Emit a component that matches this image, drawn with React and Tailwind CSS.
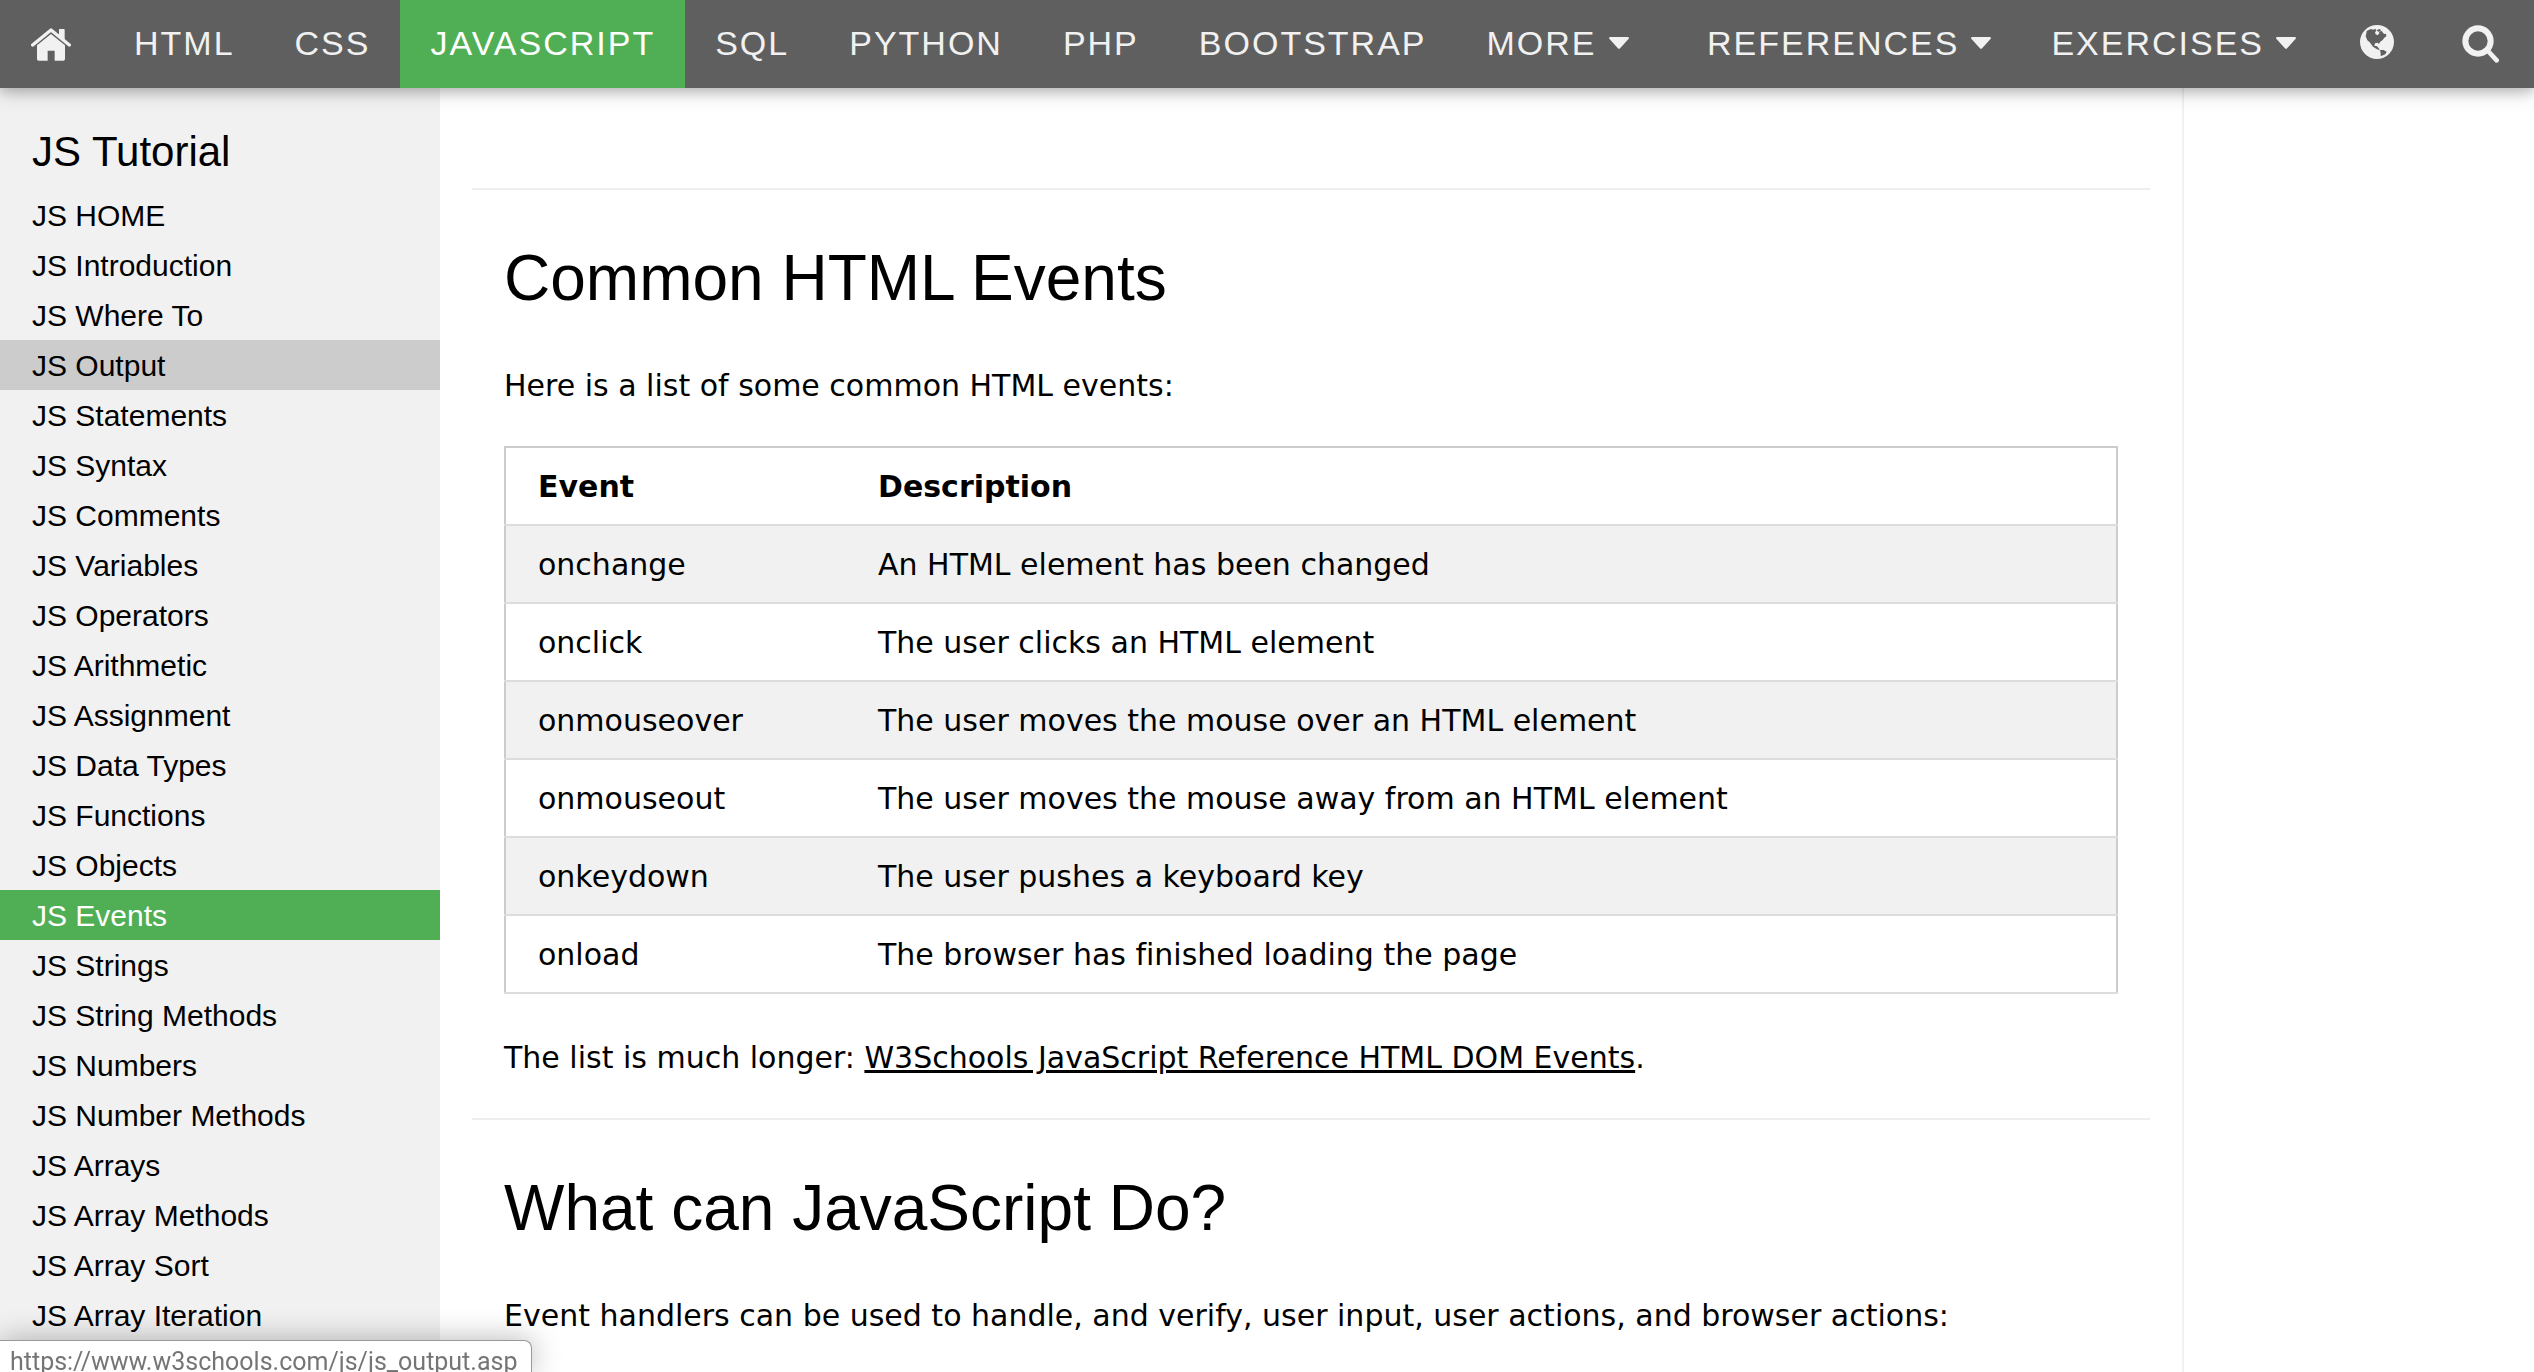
import React from "react";

function HomeIcon() {
  return (
    <svg viewBox="0 0 120 99" aria-hidden="true" className="h-[33px] w-10">
      <path d="M84 3h15q2 0 2 2v32L84 24z" fill="currentColor" />
      <path d="M5 51L60 6l55 45" fill="none" stroke="currentColor" strokeWidth="10" strokeLinecap="round" strokeLinejoin="round" />
      <path d="M60 18l42 34v41q0 5-5 5H71V68H50v30H23q-5 0-5-5V52z" fill="currentColor" />
    </svg>
  );
}

function GlobeIcon() {
  return (
    <svg viewBox="0 0 102 102" aria-hidden="true" className="size-[34px]">
      <circle cx="51" cy="51" r="51" fill="currentColor" />
      <path
        d="M20 18L32 12L40 14L46 11L49 17L45 22L47 28L53 31L58 25L57 20L65 18L72 27L78 26L79 34L73 38L68 45L60 51L57 57L53 53L45 55L43 62L51 64L55 68L60 76L51 73L39 65L29 52L22 46L17 34L19 25Z"
        fill="#5f5f5f"
      />
      <path d="M50 15l10-3 3 6-9 2z" fill="#5f5f5f" />
      <path d="M60 75L71 75L80 80L76 88L62 94L62 85Z" fill="#5f5f5f" />
    </svg>
  );
}

function SearchIcon() {
  return (
    <svg viewBox="0 0 114 114" fill="none" stroke="currentColor" strokeLinecap="round" aria-hidden="true" className="size-[38px]">
      <circle cx="48" cy="48" r="38" strokeWidth="18" />
      <path d="M78 78l26 28" strokeWidth="14" />
    </svg>
  );
}

function CaretIcon() {
  return (
    <svg viewBox="0 0 20 12" aria-hidden="true" className="ml-3 h-3 w-5" fill="currentColor">
      <path d="M1.500 0h17q1.500 0 1.500 1 0 .6-.5 1.100l-8.400 9.200q-1.100 1-2.200 0L.5 2.100Q0 1.600 0 1 0 0 1.500 0z" />
    </svg>
  );
}

const topics = ["HTML", "CSS", "JAVASCRIPT", "SQL", "PYTHON", "PHP", "BOOTSTRAP"];

const chapters = [
  "JS HOME",
  "JS Introduction",
  "JS Where To",
  "JS Output",
  "JS Statements",
  "JS Syntax",
  "JS Comments",
  "JS Variables",
  "JS Operators",
  "JS Arithmetic",
  "JS Assignment",
  "JS Data Types",
  "JS Functions",
  "JS Objects",
  "JS Events",
  "JS Strings",
  "JS String Methods",
  "JS Numbers",
  "JS Number Methods",
  "JS Arrays",
  "JS Array Methods",
  "JS Array Sort",
  "JS Array Iteration",
];

const events = [
  ["onchange", "An HTML element has been changed"],
  ["onclick", "The user clicks an HTML element"],
  ["onmouseover", "The user moves the mouse over an HTML element"],
  ["onmouseout", "The user moves the mouse away from an HTML element"],
  ["onkeydown", "The user pushes a keyboard key"],
  ["onload", "The browser has finished loading the page"],
];

function Menu({ label }) {
  return (
    <button type="button" className="flex h-full items-center px-[30px] pb-0.5 tracking-[2px]">
      {label}
      <CaretIcon />
    </button>
  );
}

function chapterStyle(name) {
  if (name === "JS Output") return "bg-[#cccccc] text-black";
  if (name === "JS Events") return "bg-[#50ae55] text-white";
  return "text-black";
}

export default function App() {
  return (
    <div className="flex h-screen flex-col overflow-hidden bg-white font-['Liberation_Sans',Arial,sans-serif] text-black">
      <nav className="relative z-10 flex h-[88px] shrink-0 items-center justify-between bg-[#5f5f5f] text-[34px] text-[#f1f1f1] shadow-[0_4px_10px_0_rgba(0,0,0,0.16),0_4px_20px_0_rgba(0,0,0,0.19)]">
        <div className="flex h-full items-center">
          <a href="#home" aria-label="Home" className="flex h-full items-center pr-[33px] pl-[31px]">
            <HomeIcon />
          </a>
          {topics.map((topic) => (
            <a
              key={topic}
              href={"#" + topic.toLowerCase()}
              className={
                topic === "JAVASCRIPT"
                  ? "flex h-full items-center bg-[#50ae55] px-[30px] pb-0.5 tracking-[2px] text-white"
                  : "flex h-full items-center px-[30px] pb-0.5 tracking-[2px]"
              }
            >
              {topic}
            </a>
          ))}
          <Menu label="MORE" />
        </div>
        <div className="flex h-full items-center">
          <Menu label="REFERENCES" />
          <Menu label="EXERCISES" />
          <button type="button" aria-label="Translate" className="flex h-full items-center px-[34px] pb-1">
            <GlobeIcon />
          </button>
          <button type="button" aria-label="Search" className="flex h-full items-center px-[34px]">
            <SearchIcon />
          </button>
        </div>
      </nav>

      <div className="flex min-h-0 flex-1">
        <aside className="w-[440px] shrink-0 overflow-hidden bg-[#f1f1f1] pt-8">
          <h2 className="px-8 pt-0.5 pb-2 text-[42px] leading-[60px]">JS Tutorial</h2>
          <ul>
            {chapters.map((name) => (
              <li key={name}>
                <a href="#chapter" className={"block px-8 pt-0.5 text-[30px] leading-[48px] " + chapterStyle(name)}>
                  {name}
                </a>
              </li>
            ))}
          </ul>
        </aside>

        <main className="min-w-0 flex-1 overflow-hidden border-r-2 border-[#f1f1f1] px-8 pt-[100px] font-[Verdana,'DejaVu_Sans',sans-serif] text-[30px] leading-[44px] [font-variant-ligatures:none]">
          <hr className="border-t-2 border-[#eeeeee]" />
          <section className="px-8 pt-10 pb-[38px]">
            <h1 className="font-['Liberation_Sans',Arial,sans-serif] text-[64px] leading-[96px]">Common HTML Events</h1>
            <p className="mt-[38px]">Here is a list of some common HTML events:</p>
            <table className="mt-[38px] mb-[42px] w-full border-collapse border-2 border-[#cccccc] text-left">
              <thead>
                <tr className="border-b-2 border-[#dddddd]">
                  <th className="w-[357px] pt-[17px] pr-4 pb-[15px] pl-8 font-bold">Event</th>
                  <th className="px-4 pt-[17px] pb-[15px] font-bold">Description</th>
                </tr>
              </thead>
              <tbody>
                {events.map(([name, text]) => (
                  <tr key={name} className="border-b-2 border-[#dddddd] odd:bg-[#f1f1f1]">
                    <td className="pt-[17px] pr-4 pb-[15px] pl-8">{name}</td>
                    <td className="px-4 pt-[17px] pb-[15px]">{text}</td>
                  </tr>
                ))}
              </tbody>
            </table>
            <p>
              The list is much longer:{" "}
              <a href="#dom-events" className="underline">
                W3Schools JavaScript Reference HTML DOM Events
              </a>
              .
            </p>
          </section>
          <hr className="border-t-2 border-[#eeeeee]" />
          <section className="px-8 pt-10">
            <h1 className="font-['Liberation_Sans',Arial,sans-serif] text-[64px] leading-[96px]">What can JavaScript Do?</h1>
            <p className="mt-[38px]">
              Event handlers can be used to handle, and verify, user input, user actions, and browser actions:
            </p>
          </section>
        </main>
        <div className="w-[350px] shrink-0" />
      </div>

      <div className="fixed bottom-0 left-0 z-20 h-8 rounded-tr-lg border-t border-r border-[#999999] bg-white pt-1 pr-3.5 pl-2.5 font-[Roboto,sans-serif] text-[25px] leading-[34px] whitespace-nowrap text-[#757575] shadow-[0_0_30px_rgba(0,0,0,0.3)]">
        https://www.w3schools.com/js/js_output.asp
      </div>
    </div>
  );
}
